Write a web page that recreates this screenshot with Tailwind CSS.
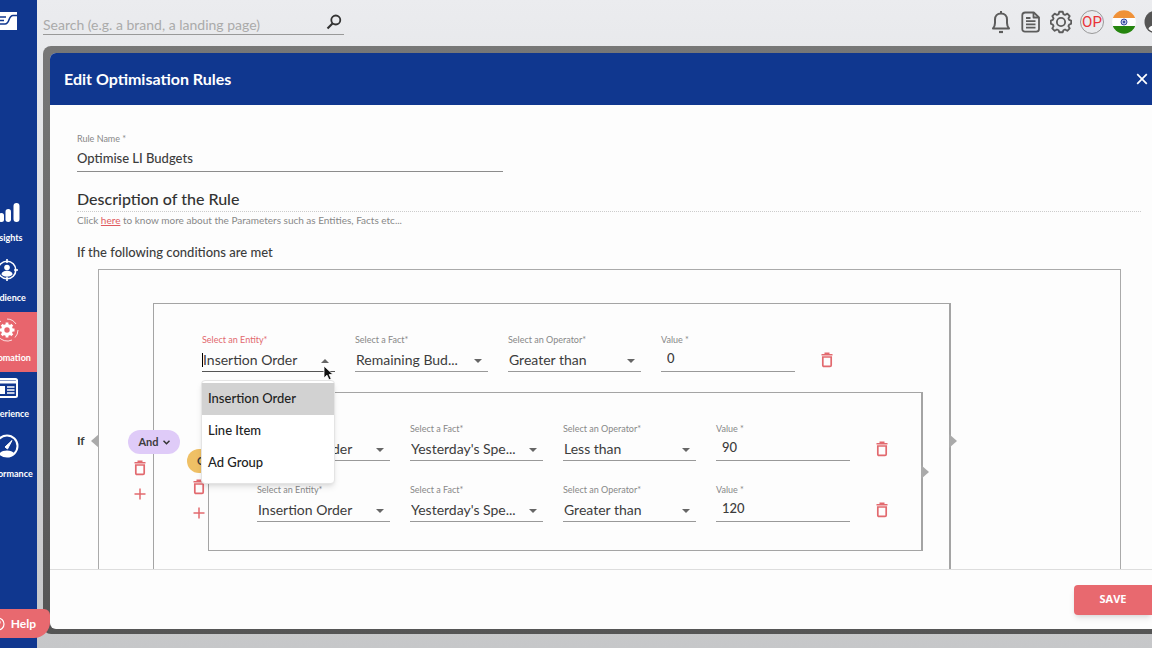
<!DOCTYPE html>
<html lang="en">
<head>
    <meta charset="UTF-8">
    <meta name="viewport" content="width=device-width, initial-scale=1.0">
    <title>Edit Optimisation Rules</title>
    <script src="https://cdn.jsdelivr.net/npm/@tailwindcss/browser@4"></script>
</head>
<body class="h-screen flex overflow-hidden bg-linear-to-b from-[#ebecef] to-[#c6c7c9] font-['Lato',sans-serif] text-[#3c3c3c]">

    <!-- Shared icons -->
    <svg class="hidden">
        <symbol id="trash" viewBox="0 0 12 16">
            <path d="M.5 2.800h11M3.500 1.300h5" fill="none" stroke="#e2696e" stroke-width="1.500"/>
            <path d="M1.800 5h8.400v8.200q0 1.200-1.200 1.200H3q-1.200 0-1.200-1.200z" fill="none" stroke="#e2696e" stroke-width="1.700"/>
        </symbol>
        <symbol id="plus" viewBox="0 0 12 12">
            <path d="M6 .5v11M.5 6h11" fill="none" stroke="#e2696e" stroke-width="1.500"/>
        </symbol>
        <symbol id="caret" viewBox="0 0 8 4">
            <path d="M0 0h8L4 4z" fill="#666"/>
        </symbol>
    </svg>

    <!-- Sidebar -->
    <aside class="w-[37px] shrink-0 bg-[#10378f] text-white flex justify-end overflow-hidden">
        <div class="w-15 shrink-0 flex flex-col">
            <a href="#" aria-label="Home" class="h-[192px] pt-3 pl-5">
                <svg class="w-5 h-[18px]" viewBox="0 0 20 18">
                    <rect width="20" height="18" fill="#fff"/>
                    <path d="M0 5h9M0 12h8c5 0 3-8.500 8-8.500h4M0 8.500h7" stroke="#10378f" stroke-width="1.600" fill="none"/>
                </svg>
            </a>
            <nav class="flex flex-col text-[9px] leading-3 font-bold">
                <a href="#" class="h-[60px] flex flex-col items-center justify-between pt-2 pb-2">
                    <svg class="w-[26px] h-6" viewBox="0 0 26 24" fill="#fff">
                        <rect x="0" y="16" width="5" height="7" rx="2.500"/>
                        <rect x="5" y="13" width="5" height="9" rx="2.500"/>
                        <rect x="11.500" y="9" width="5.500" height="13" rx="2.700"/>
                        <rect x="19.500" y="3" width="6" height="19" rx="2.900"/>
                    </svg>
                    <span>Insights</span>
                </a>
                <a href="#" class="h-[60px] flex flex-col items-center justify-between pt-1.5 pb-2">
                    <svg class="w-6 h-6" viewBox="0 0 24 24" fill="none" stroke="#fff" stroke-width="1.600">
                        <circle cx="12" cy="12" r="8.800"/>
                        <path d="M12 1v4M12 19v4M1 12h4M19 12h4"/>
                        <circle cx="12" cy="9.500" r="2.800" fill="#fff" stroke="none"/>
                        <path d="M6.500 16.500c0-5 11-5 11 0-2.500 3-8.500 3-11 0z" fill="#fff" stroke="none"/>
                    </svg>
                    <span>Audience</span>
                </a>
                <a href="#" class="h-[60px] flex flex-col items-center justify-between pt-1.5 pb-2 bg-[#e8656d]">
                    <svg class="w-6 h-6" viewBox="0 0 24 24" fill="none" stroke="#fff">
                        <path d="M12 1a11 11 0 0 1 9 5M23 12a11 11 0 0 1-3 7.500M17 22a11 11 0 0 1-14-4M1 12a11 11 0 0 1 5-9" stroke-width=".8"/>
                        <circle cx="12" cy="12" r="4.300" stroke-width="3.200"/>
                        <path d="M12 4.500v3M12 16.500v3M4.500 12h3M16.500 12h3M6.700 6.700l2 2M15.300 15.300l2 2M17.300 6.700l-2 2M8.700 15.300l-2 2" stroke-width="2.800"/>
                    </svg>
                    <span>Automation</span>
                </a>
                <a href="#" class="h-[50px] flex flex-col items-center justify-between pt-1.5 pb-0.5">
                    <svg class="w-[22px] h-5" viewBox="0 0 22 20">
                        <rect x="1" y="1" width="20" height="18" rx="1.500" fill="none" stroke="#fff" stroke-width="2"/>
                        <path d="M1 4h20" stroke="#fff" stroke-width="3"/>
                        <rect x="3.500" y="8" width="5.500" height="8" fill="#fff"/>
                        <path d="M11 9h7.500M11 12h7.500M11 15h7.500" stroke="#fff" stroke-width="1.500"/>
                    </svg>
                    <span>Experience</span>
                </a>
                <a href="#" class="h-[60px] flex flex-col items-center justify-between pt-3 pb-0.5">
                    <svg class="w-6 h-6" viewBox="0 0 24 24">
                        <circle cx="12" cy="12" r="10.500" fill="none" stroke="#fff" stroke-width="2"/>
                        <path d="M4.500 19.500c3-4 12-4 15 0-4 4-11 4-15 0z" fill="#fff"/>
                        <path d="M10 13l7-6.500-4.500 8.500z" fill="#fff" stroke="#fff"/>
                    </svg>
                    <span>Performance</span>
                </a>
            </nav>
        </div>
    </aside>

    <div class="flex-1 min-w-0 flex flex-col pl-1.5">
        <!-- Top bar -->
        <header class="h-[46px] shrink-0 flex items-start justify-between">
            <label class="w-[301px] h-[23px] mt-3 flex items-center border-b border-[#999]">
                <input type="search" aria-label="Search" placeholder="Search (e.g. a brand, a landing page)" class="flex-1 min-w-0 pt-0.5 text-[14px] outline-none placeholder:text-[#aaa]">
                <svg class="w-4 h-4 mr-0.5 mb-0.5" viewBox="0 0 16 16" fill="none" stroke="#333" stroke-width="1.800">
                    <circle cx="9.800" cy="6" r="4.500"/>
                    <path d="M6.500 9.500L1.500 14.500" stroke-width="2.200"/>
                </svg>
            </label>
            <div class="flex items-center gap-2 mt-2.5 -mr-4">
                <button aria-label="Notifications">
                    <svg class="w-[22px] h-6" viewBox="1 0 22 24" fill="none" stroke="#5c5c5c" stroke-width="2" stroke-linejoin="round">
                        <path d="M12 1v2.500M4 18.500h16c-1.500-1.800-2-3-2-5.500V9.500c0-3.500-2.200-6-6-6s-6 2.500-6 6V13c0 2.500-.5 3.700-2 5.500z"/>
                        <path d="M10 22h4" stroke-width="2.200"/>
                    </svg>
                </button>
                <button aria-label="Reports">
                    <svg class="w-[22px] h-6" viewBox="1 0 22 24" fill="none" stroke="#5c5c5c" stroke-width="1.800" stroke-linejoin="round">
                        <path d="M6.300 2.500h8.500l5.200 5V19c0 1.800-1 2.700-2.700 2.700H6c-1.800 0-2.700-1-2.700-2.700V5.200c0-1.700 1.200-2.700 3-2.700z"/>
                        <path d="M14.500 2.500v5H20M7 8h4.500M7 11.200h9.500M7 14.400h9.500M7 17.600h9.500"/>
                    </svg>
                </button>
                <button aria-label="Settings">
                    <svg class="w-[22px] h-6" viewBox="0 1 24 24" fill="none" stroke="#5c5c5c" stroke-width="2" stroke-linejoin="round">
                        <path d="M10.100 1.800h3.800l.7 2.700 1.800.8 2.500-1.400 2.600 2.600-1.400 2.500.8 1.800 2.200.7v3.400l-2.200.9-.8 1.700 1.400 2.500-2.600 2.600-2.500-1.400-1.800.8-.7 2.200h-3.800l-.7-2.200-1.800-.8-2.500 1.400-2.600-2.600 1.400-2.500-.8-1.700-2.200-.9v-3.400l2.200-.7.8-1.800-1.400-2.500 2.600-2.600 2.500 1.400 1.800-.8z"/>
                        <circle cx="12" cy="13" r="4.500"/>
                    </svg>
                </button>
                <button class="w-6 h-6 rounded-full border border-[#999] text-[15px] leading-5 text-[#e8343a] flex items-center justify-center font-['Roboto',sans-serif]">OP</button>
                <button aria-label="Country: India">
                    <svg class="w-6 h-6" viewBox="0 0 24 24">
                        <clipPath id="flag"><circle cx="12" cy="12" r="11.800"/></clipPath>
                        <g clip-path="url(#flag)">
                            <rect width="24" height="24" fill="#fff"/>
                            <rect width="24" height="8" fill="#ef9138"/>
                            <rect y="16" width="24" height="8" fill="#25850f"/>
                        </g>
                        <circle cx="12" cy="12" r="3" fill="#b9c2e4" stroke="#3a4da0" stroke-width="1"/>
                        <circle cx="12" cy="12" r="1.200" fill="#3a4da0"/>
                    </svg>
                </button>
                <button aria-label="Account">
                    <svg class="w-6 h-6" viewBox="0 0 24 24">
                        <circle cx="12" cy="12" r="11.500" fill="#555"/>
                        <circle cx="12" cy="9" r="4" fill="#fff"/>
                        <path d="M4.500 19c1-5 14-5 15 0-4 4-11 4-15 0z" fill="#fff"/>
                    </svg>
                </button>
            </div>
        </header>

        <!-- Dialog -->
        <div class="flex-1 min-h-0 mb-3.5 pt-[7px] pl-[7px] pb-[5px] rounded-l-lg bg-linear-to-b from-[#777] to-[#555]">
            <main role="dialog" aria-labelledby="dialog-title" class="h-full flex flex-col rounded-l-md overflow-hidden bg-[#fdfdfd]">
                <div class="h-[52px] shrink-0 flex items-center justify-between pl-3.5 pr-1 bg-[#10378f] text-white">
                    <h1 id="dialog-title" class="text-[16px] font-bold">Edit Optimisation Rules</h1>
                    <button aria-label="Close">
                        <svg class="w-3 h-3" viewBox="0 0 12 12" fill="none" stroke="#fff" stroke-width="1.700"><path d="M1.200 1.200l9.600 9.600M10.800 1.200l-9.600 9.600"/></svg>
                    </button>
                </div>

                <div class="flex-1 min-h-0 overflow-hidden pl-[27px] pr-[11px] pt-7">
                    <div class="w-[426px] flex flex-col border-b border-[#8c8c8c]">
                        <label for="rule-name" class="text-[9px] leading-3 text-[#888]">Rule Name *</label>
                        <input id="rule-name" type="text" value="Optimise LI Budgets" class="h-[26px] text-[13px] font-medium outline-none">
                    </div>

                    <h2 class="mt-[15px] h-6 text-[16px] leading-6 font-medium border-b border-dotted border-[#ccc] box-content text-[#333]">Description of the Rule</h2>
                    <p class="text-[10px] leading-4 text-[#888]">Click <a href="#" class="underline text-[#e05a60]">here</a> to know more about the Parameters such as Entities, Facts etc...</p>
                    <p class="mt-3.5 text-[13px] leading-5 font-medium">If the following conditions are met</p>

                    <div class="mt-[7px] mr-5 flex items-center">
                        <span class="w-[21px] text-[12px] font-bold">If</span>
                        <div class="relative flex-1 border border-[#aaa] py-[33px] pl-[54px]">
                            <svg class="absolute -left-2 top-1/2 -translate-y-1/2 w-2 h-3.5" viewBox="0 0 8 14"><path d="M8 0v14L0 7z" fill="#aaa"/></svg>

                            <!-- "And" group -->
                            <div class="relative max-w-[798px] border border-r-2 border-[#a4a4a4] pt-[29px] pb-[27px]">
                                <svg class="absolute -right-2 top-1/2 -translate-y-1/2 w-2 h-3.5" viewBox="0 0 8 14"><path d="M0 0v14l8-7z" fill="#aaa"/></svg>
                                <div class="absolute -left-[26px] top-[126px] flex flex-col">
                                    <button class="w-[52px] h-6 rounded-full bg-[#dfcbf8] flex items-center justify-center gap-1 text-[11px] font-bold">And
                                        <svg class="w-[7px] h-[5px]" viewBox="0 0 7 5" fill="none" stroke="#333" stroke-width="1.500"><path d="M.5 .8l3 3 3-3"/></svg>
                                    </button>
                                    <button aria-label="Delete group" class="ml-1.5 mt-1.5 w-3"><svg class="w-3 h-4"><use href="#trash"/></svg></button>
                                    <button aria-label="Add rule" class="ml-1.5 mt-3 w-3"><svg class="w-3 h-3"><use href="#plus"/></svg></button>
                                </div>

                                <div class="flex items-end gap-5 pl-12">
                                    <div class="relative w-[133px]">
                                        <label for="entity-1" class="block text-[9px] leading-3.5 text-[#e2696e]">Select an Entity*</label>
                                        <input id="entity-1" type="text" role="combobox" aria-expanded="true" value="Insertion Order" class="block w-full h-[25px] pl-px text-[14px] border-b border-[#555] outline-none">
                                        <span class="absolute left-0 top-5 w-px h-3.5 bg-black"></span>
                                        <svg class="absolute right-1.5 top-[26px] w-2 h-1 rotate-180"><use href="#caret"/></svg>
                                        <!-- Pointer -->
                                        <svg class="absolute right-0 top-8 z-30 w-3 h-4" viewBox="0 0 12 16"><path d="M1 1v12l3-2.800 2 4.600 2.200-1-2-4.300H10z" fill="#111" stroke="#fff" stroke-width=".8"/></svg>
                                        <ul role="listbox" class="absolute z-20 -left-px top-[47px] w-[134px] pt-0.5 pb-1 rounded-sm bg-white shadow-md border border-[#e4e4e4] text-[13px] font-medium text-[#222]">
                                            <li role="option" aria-selected="true" class="h-8 px-1.5 flex items-center bg-[#d2d2d2]">Insertion Order</li>
                                            <li role="option" class="h-8 px-1.5 flex items-center">Line Item</li>
                                            <li role="option" class="h-8 px-1.5 flex items-center">Ad Group</li>
                                        </ul>
                                    </div>
                                    <div class="relative w-[133px]">
                                        <label for="fact-1" class="block text-[9px] leading-3.5 text-[#888]">Select a Fact*</label>
                                        <select id="fact-1" class="appearance-none block w-full h-[25px] pl-px text-[14px] border-b border-[#999] outline-none"><option>Remaining Bud...</option></select>
                                        <svg class="absolute right-1.5 top-[26px] w-2 h-1"><use href="#caret"/></svg>
                                    </div>
                                    <div class="relative w-[133px]">
                                        <label for="operator-1" class="block text-[9px] leading-3.5 text-[#888]">Select an Operator*</label>
                                        <select id="operator-1" class="appearance-none block w-full h-[25px] pl-px text-[14px] border-b border-[#999] outline-none"><option>Greater than</option></select>
                                        <svg class="absolute right-1.5 top-[26px] w-2 h-1"><use href="#caret"/></svg>
                                    </div>
                                    <div class="w-[134px]">
                                        <label for="value-1" class="block text-[9px] leading-3.5 text-[#888]">Value *</label>
                                        <input id="value-1" type="text" value="0" class="block w-full h-[25px] pb-0.5 pl-1.5 text-[13px] font-medium border-b border-[#999] outline-none">
                                    </div>
                                    <button aria-label="Delete condition" class="ml-1.5 mb-1"><svg class="w-3 h-4"><use href="#trash"/></svg></button>
                                </div>

                                <!-- "Or" group -->
                                <div class="relative mt-5 ml-[54px] mr-[26px] border border-r-2 border-[#a4a4a4] pt-[29px] pb-7 pl-12 flex flex-col gap-[22px]">
                                    <svg class="absolute -right-2 top-1/2 -translate-y-1/2 w-2 h-3.5" viewBox="0 0 8 14"><path d="M0 0v14l8-7z" fill="#aaa"/></svg>
                                    <div class="absolute -left-[22px] top-14 flex flex-col">
                                        <button class="w-11 h-6 rounded-full bg-[#efc065] flex items-center justify-center gap-1 text-[11px] font-bold">Or
                                            <svg class="w-[7px] h-[5px]" viewBox="0 0 7 5" fill="none" stroke="#333" stroke-width="1.500"><path d="M.5 .8l3 3 3-3"/></svg>
                                        </button>
                                        <button aria-label="Delete group" class="ml-1.5 mt-1.5 w-3"><svg class="w-3 h-4"><use href="#trash"/></svg></button>
                                        <button aria-label="Add rule" class="ml-1.5 mt-3 w-3"><svg class="w-3 h-3"><use href="#plus"/></svg></button>
                                    </div>

                                    <div class="flex items-end gap-5">
                                        <div class="relative w-[133px]">
                                            <label for="entity-2" class="block text-[9px] leading-3.5 text-[#888]">Select an Entity*</label>
                                            <select id="entity-2" class="appearance-none block w-full h-[25px] pl-px text-[14px] border-b border-[#999] outline-none"><option>Insertion Order</option></select>
                                            <svg class="absolute right-1.5 top-[26px] w-2 h-1"><use href="#caret"/></svg>
                                        </div>
                                        <div class="relative w-[133px]">
                                            <label for="fact-2" class="block text-[9px] leading-3.5 text-[#888]">Select a Fact*</label>
                                            <select id="fact-2" class="appearance-none block w-full h-[25px] pl-px text-[14px] border-b border-[#999] outline-none"><option>Yesterday's Spe...</option></select>
                                            <svg class="absolute right-1.5 top-[26px] w-2 h-1"><use href="#caret"/></svg>
                                        </div>
                                        <div class="relative w-[133px]">
                                            <label for="operator-2" class="block text-[9px] leading-3.5 text-[#888]">Select an Operator*</label>
                                            <select id="operator-2" class="appearance-none block w-full h-[25px] pl-px text-[14px] border-b border-[#999] outline-none"><option>Less than</option></select>
                                            <svg class="absolute right-1.5 top-[26px] w-2 h-1"><use href="#caret"/></svg>
                                        </div>
                                        <div class="w-[134px]">
                                            <label for="value-2" class="block text-[9px] leading-3.5 text-[#888]">Value *</label>
                                            <input id="value-2" type="text" value="90" class="block w-full h-[25px] pb-0.5 pl-1.5 text-[13px] font-medium border-b border-[#999] outline-none">
                                        </div>
                                        <button aria-label="Delete condition" class="ml-1.5 mb-1"><svg class="w-3 h-4"><use href="#trash"/></svg></button>
                                    </div>

                                    <div class="flex items-end gap-5">
                                        <div class="relative w-[133px]">
                                            <label for="entity-3" class="block text-[9px] leading-3.5 text-[#888]">Select an Entity*</label>
                                            <select id="entity-3" class="appearance-none block w-full h-[25px] pl-px text-[14px] border-b border-[#999] outline-none"><option>Insertion Order</option></select>
                                            <svg class="absolute right-1.5 top-[26px] w-2 h-1"><use href="#caret"/></svg>
                                        </div>
                                        <div class="relative w-[133px]">
                                            <label for="fact-3" class="block text-[9px] leading-3.5 text-[#888]">Select a Fact*</label>
                                            <select id="fact-3" class="appearance-none block w-full h-[25px] pl-px text-[14px] border-b border-[#999] outline-none"><option>Yesterday's Spe...</option></select>
                                            <svg class="absolute right-1.5 top-[26px] w-2 h-1"><use href="#caret"/></svg>
                                        </div>
                                        <div class="relative w-[133px]">
                                            <label for="operator-3" class="block text-[9px] leading-3.5 text-[#888]">Select an Operator*</label>
                                            <select id="operator-3" class="appearance-none block w-full h-[25px] pl-px text-[14px] border-b border-[#999] outline-none"><option>Greater than</option></select>
                                            <svg class="absolute right-1.5 top-[26px] w-2 h-1"><use href="#caret"/></svg>
                                        </div>
                                        <div class="w-[134px]">
                                            <label for="value-3" class="block text-[9px] leading-3.5 text-[#888]">Value *</label>
                                            <input id="value-3" type="text" value="120" class="block w-full h-[25px] pb-0.5 pl-1.5 text-[13px] font-medium border-b border-[#999] outline-none">
                                        </div>
                                        <button aria-label="Delete condition" class="ml-1.5 mb-1"><svg class="w-3 h-4"><use href="#trash"/></svg></button>
                                    </div>
                                </div>
                            </div>
                        </div>
                    </div>
                </div>

                <div class="h-[60px] shrink-0 flex items-center justify-end border-t border-[#ddd]">
                    <button class="w-[78px] h-[30px] rounded-l-sm bg-[#e8696f] text-white text-[11px] font-bold shadow-md font-['Open_Sans',sans-serif]">SAVE</button>
                </div>
            </main>
        </div>
    </div>

    <!-- Help launcher -->
    <button class="fixed left-0 bottom-2.5 z-40 w-[50px] h-[29px] rounded-tr-md rounded-br-2xl bg-[#e8696f] text-white text-[12px] font-bold flex items-center justify-end gap-1.5 pr-3.5 overflow-hidden">
        <svg class="w-3.5 h-3.5 shrink-0" viewBox="0 0 14 14" fill="none" stroke="#fff" stroke-width="1.200">
            <circle cx="7" cy="7" r="6"/>
            <path d="M5 5.500c0-2.700 4-2.700 4 0 0 1.500-2 1.500-2 3M7 9.800v1.200"/>
        </svg>
        Help
    </button>
</body>
</html>
